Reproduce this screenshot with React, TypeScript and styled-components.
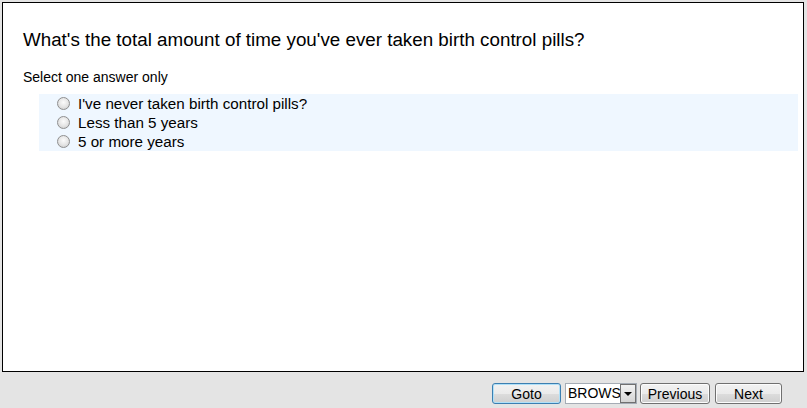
import React from "react";
import styled, { createGlobalStyle } from "styled-components";

const Global = createGlobalStyle`
  html, body { margin: 0; padding: 0; background: #e4e4e4; }
  body { font-family: Arial, "Liberation Sans", sans-serif; color: #000; }
`;

const Page = styled.div`
  width: 807px;
  height: 408px;
  padding: 2px 3px 0 2px;
  box-sizing: border-box;
  display: flex;
  flex-direction: column;
`;

const Panel = styled.div`
  height: 370px;
  flex: none;
  box-sizing: border-box;
  border: 1px solid #000;
  background: #fff;
  padding: 20px 5px 0 20px;
`;

const Question = styled.h1`
  margin: 0;
  font-size: 18.8px;
  font-weight: normal;
  line-height: 34px;
`;

const Hint = styled.div`
  font-size: 14px;
  margin-top: 12px;
  line-height: 16px;
`;

const Options = styled.div`
  margin: 9px 0 0 16px;
  background: #eff7ff;
  padding: 0 0 0 18px;
  display: flex;
  flex-direction: column;
`;

const Option = styled.label`
  display: flex;
  align-items: center;
  height: 19px;
  font-size: 15.2px;
  gap: 8px;
`;

const Radio = styled.span`
  width: 11px;
  height: 11px;
  border-radius: 50%;
  border: 1px solid #8f8f8f;
  background: radial-gradient(circle at 50% 40%, #fbfbfb 0%, #e6e6e6 50%, #c8c8c8 100%);
  flex: none;
`;

const Footer = styled.div`
  flex: 1;
  display: flex;
  justify-content: flex-end;
  align-items: flex-start;
  padding: 11px 22px 0 0;
`;

const Button = styled.button<{ $focus?: boolean; $w: number; $ml?: number }>`
  width: ${(p) => p.$w}px;
  margin-left: ${(p) => p.$ml ?? 0}px;
  height: 21px;
  font-family: Arial, "Liberation Sans", sans-serif;
  font-size: 14px;
  border-radius: 3px;
  border: 1px solid ${(p) => (p.$focus ? "#3c7fb1" : "#707070")};
  background: linear-gradient(#f2f2f2 0%, #ebebeb 50%, #dddddd 51%, #cfcfcf 100%);
  padding: 0;
  color: #000;
  box-shadow: ${(p) => (p.$focus ? "inset 0 0 0 1px #b0e0f8" : "inset 0 0 0 1px #fcfcfc")};
`;

const Select = styled.div`
  width: 72px;
  margin-left: 4px;
  height: 21px;
  box-sizing: border-box;
  border: 1px solid #a5acb5;
  background: #fff;
  display: flex;
  align-items: stretch;
  font-size: 14px;
  overflow: hidden;
`;

const SelectText = styled.span`
  flex: 1;
  overflow: hidden;
  white-space: nowrap;
  padding-left: 2px;
  line-height: 19px;
`;

const Arrow = styled.span`
  width: 16px;
  box-sizing: border-box;
  border: 1px solid #707070;
  background: linear-gradient(#f2f2f2, #d4d4d4);
  display: flex;
  align-items: center;
  justify-content: center;
  &::after {
    content: "";
    border-left: 4px solid transparent;
    border-right: 4px solid transparent;
    border-top: 4px solid #000;
  }
`;

export default function App() {
  const opts = ["I've never taken birth control pills?", "Less than 5 years", "5 or more years"];
  return (
    <>
      <Global />
      <Page>
        <Panel>
          <Question>What's the total amount of time you've ever taken birth control pills?</Question>
          <Hint>Select one answer only</Hint>
          <Options>
            {opts.map((o) => (
              <Option key={o}>
                <Radio />
                {o}
              </Option>
            ))}
          </Options>
        </Panel>
        <Footer>
          <Button $focus $w={69}>Goto</Button>
          <Select>
            <SelectText>BROWSE</SelectText>
            <Arrow />
          </Select>
          <Button $w={70} $ml={3}>Previous</Button>
          <Button $w={67} $ml={5}>Next</Button>
        </Footer>
      </Page>
    </>
  );
}
